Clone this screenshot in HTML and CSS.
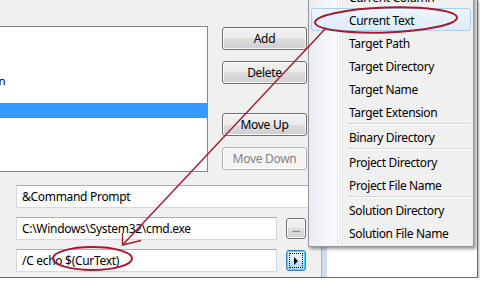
FILE: index.html
```html
<!DOCTYPE html>
<html lang="en">
<head>
  <meta charset="UTF-8" />
  <title>External Tools</title>
  <link rel="stylesheet" href="styles.css">
</head>
<body>

  <div class="shot">
    <!-- Dialog (cortado na esquerda) -->
    <div class="dialog">
      <div class="top">
        <div class="list">
          <div class="item"></div>
          <div class="item"></div>
          <div class="item"></div>
          <div class="item">Dotfuscator Community Edition</div>
          <div class="item"></div>
          <div class="item selected"></div>
        </div>
        <div class="buttons">
          <button class="btn">Add</button>
          <button class="btn">Delete</button>
          <button class="btn up">Move Up</button>
          <button class="btn" disabled>Move Down</button>
        </div>
      </div>

      <div class="fields">
        <div class="row"><div class="field wide">&amp;Command Prompt</div></div>
        <div class="row">
          <div class="field">C:\Windows\System32\cmd.exe</div>
          <button class="small">...</button>
        </div>
        <div class="row">
          <div class="field">/C echo $(CurText)</div>
          <button class="small focus"><span class="dots"><span class="tri"></span></span></button>
        </div>
      </div>
    </div>
    <div class="frame"></div>
    <div class="behind"></div>

    <!-- Menu de argumentos -->
    <div class="menu">
      <div class="mi">Current Line</div>
      <div class="mi">Current Column</div>
      <div class="mi hot">Current Text</div>
      <div class="mi">Target Path</div>
      <div class="mi">Target Directory</div>
      <div class="mi">Target Name</div>
      <div class="mi">Target Extension</div>
      <div class="sep"></div>
      <div class="mi">Binary Directory</div>
      <div class="sep"></div>
      <div class="mi">Project Directory</div>
      <div class="mi">Project File Name</div>
      <div class="sep"></div>
      <div class="mi">Solution Directory</div>
      <div class="mi">Solution File Name</div>
    </div>

    <!-- Anotações em vermelho -->
    <svg class="marks" width="480" height="283" viewBox="0 0 480 283">
      <ellipse cx="386" cy="20" rx="71" ry="12.5" transform="rotate(-2 386 20)" />
      <ellipse cx="92.5" cy="258.5" rx="39.5" ry="11.5" />
      <line x1="326" y1="28" x2="122.5" y2="245" />
      <polyline points="122.5,233 122.5,245 141,240.5" />
    </svg>
  </div>

</body>
</html>
```

FILE: styles.css
```css
* { box-sizing: border-box; margin: 0; padding: 0; }

body {
  margin: 0;
  background: #fff;
  font-family: "Noto Sans", "Open Sans", sans-serif;
  font-size: 12px;
  letter-spacing: -0.3px;
  color: #000;
}

.shot {
  position: relative;
  display: flex;
  width: 478px;
  height: 278px;
  overflow: hidden;
  border-right: 1px solid #6a6a6a;
  border-bottom: 1px solid #6a6a6a;
  box-shadow: 1px 1px 2px rgba(0,0,0,0.35);
}

.dialog {
  width: 321px;
  flex-shrink: 0;
  background: #f0f0f0;
  padding-top: 26px;
  overflow: hidden;
}
.frame {
  width: 6px;
  flex-shrink: 0;
  background: #cddcee;
  border-left: 1px solid #9fb5cf;
}
.behind { flex: 1; background: #fff; }

/* Lista + botões */
.top { display: flex; height: 146px; align-items: flex-start; }

.list {
  margin-left: -159px;
  width: 367px;
  height: 146px;
  flex-shrink: 0;
  background: #fff;
  border: 1px solid #828790;
  padding-top: 1px;
  font-size: 11.5px;
  letter-spacing: -0.35px;
}
.item {
  height: 15px;
  line-height: 15px;
  padding-left: 3px;
  white-space: nowrap;
  overflow: hidden;
}
.item.selected { background: #3399ff; color: #fff; }

.buttons {
  display: flex;
  flex-direction: column;
  margin-left: 14px;
  width: 85px;
  flex-shrink: 0;
  padding-top: 1px;
}
.btn {
  height: 23px;
  margin-bottom: 11px;
  font-family: inherit;
  font-size: inherit;
  letter-spacing: inherit;
  color: #000;
  border: 1px solid #707070;
  border-radius: 3px;
  background: linear-gradient(#f2f2f2 0%, #ebebeb 50%, #dddddd 50%, #cfcfcf 100%);
  box-shadow: inset 0 0 0 1px #fcfcfc;
}
.btn.up { margin-top: 18px; }
.btn:last-child { margin-bottom: 0; }
.btn:disabled {
  color: #838383;
  border-color: #adb2b5;
  background: #f4f4f4;
}

/* Campos */
.fields {
  padding: 13px 0 5px 16px;
  display: flex;
  flex-direction: column;
  gap: 9px;
}
.row { display: flex; align-items: center; gap: 9px; height: 23px; }

.field {
  width: 261px;
  height: 23px;
  line-height: 21px;
  padding-left: 5px;
  background: #fff;
  border: 1px solid #d5d8dd;
  border-top-color: #abadb3;
  white-space: nowrap;
  overflow: hidden;
}
.field.wide { width: 310px; }

.small {
  width: 20px;
  height: 21px;
  font-family: inherit;
  font-size: 9px;
  line-height: 9px;
  letter-spacing: 0;
  border: 1px solid #707070;
  border-radius: 3px;
  background: linear-gradient(#f2f2f2 0%, #ebebeb 50%, #dddddd 50%, #cfcfcf 100%);
  box-shadow: inset 0 0 0 1px #fcfcfc;
  display: flex;
  align-items: center;
  justify-content: center;
}
.small.focus {
  border-color: #3c7fb1;
  background: linear-gradient(#eaf6fd 0%, #d9f0fc 50%, #bee6fd 50%, #a7d9f5 100%);
  box-shadow: inset 0 0 0 1px #48d8fb;
}
.dots {
  width: 14px;
  height: 15px;
  border: 1px dotted #000;
  display: flex;
  align-items: center;
  justify-content: center;
}
.tri {
  width: 0;
  height: 0;
  border-left: 4px solid #000;
  border-top: 4px solid transparent;
  border-bottom: 4px solid transparent;
}

/* Menu popup */
.menu {
  position: absolute;
  left: 308px;
  top: -41px;
  width: 166px;
  padding: 2px;
  border: 1px solid #979797;
  background: linear-gradient(to right, #e9ebf2 0, #fbfbfd 28px, #e2e3e3 28px, #e2e3e3 29px, #fff 29px, #fff 30px, #f0f0f0 30px);
  box-shadow: 2px 2px 3px rgba(0,0,0,0.4);
  letter-spacing: -0.35px;
}
.mi {
  height: 23px;
  line-height: 23px;
  padding-left: 37px;
  white-space: nowrap;
  border: 1px solid transparent;
  border-radius: 3px;
}
.mi.hot {
  border-color: #a8d1f3;
  background: linear-gradient(#eef5fd, #dcebfc);
}
.sep {
  height: 2px;
  margin-left: 37px;
  border-top: 1px solid #d7d7d7;
  border-bottom: 1px solid #fff;
}

/* Anotações */
.marks {
  position: absolute;
  left: 0;
  top: 0;
  pointer-events: none;
  fill: none;
  stroke: #a8182e;
}
.marks ellipse { stroke-width: 2; }
.marks line, .marks polyline { stroke-width: 1.4; }
```
